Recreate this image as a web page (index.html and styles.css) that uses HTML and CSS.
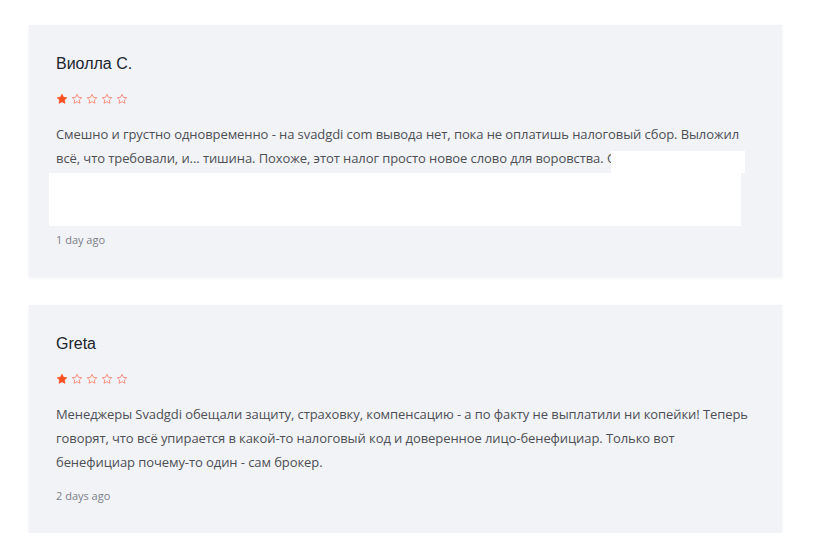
FILE: index.html
```html
<!DOCTYPE html>
<html lang="ru">
<head>
    <meta charset="UTF-8">
    <title>Отзывы</title>
    <link rel="stylesheet" href="styles.css">
</head>
<body>
    <div class="reviews">
        <div class="review">
            <div class="review-name">Виолла С.</div>
            <div class="stars">
                <svg class="star full" viewBox="0 0 24 24"><path d="M12 2.5l2.9 6.1 6.6.8-4.9 4.6 1.3 6.6L12 17.3l-5.9 3.3 1.3-6.6-4.9-4.6 6.6-.8z"/></svg>
                <svg class="star" viewBox="0 0 24 24"><path d="M12 2.5l2.9 6.1 6.6.8-4.9 4.6 1.3 6.6L12 17.3l-5.9 3.3 1.3-6.6-4.9-4.6 6.6-.8z"/></svg>
                <svg class="star" viewBox="0 0 24 24"><path d="M12 2.5l2.9 6.1 6.6.8-4.9 4.6 1.3 6.6L12 17.3l-5.9 3.3 1.3-6.6-4.9-4.6 6.6-.8z"/></svg>
                <svg class="star" viewBox="0 0 24 24"><path d="M12 2.5l2.9 6.1 6.6.8-4.9 4.6 1.3 6.6L12 17.3l-5.9 3.3 1.3-6.6-4.9-4.6 6.6-.8z"/></svg>
                <svg class="star" viewBox="0 0 24 24"><path d="M12 2.5l2.9 6.1 6.6.8-4.9 4.6 1.3 6.6L12 17.3l-5.9 3.3 1.3-6.6-4.9-4.6 6.6-.8z"/></svg>
            </div>
            <div class="review-text">
                Смешно и грустно одновременно - на svadgdi com вывода нет, пока не оплатишь налоговый сбор. Выложил всё, что требовали, и... тишина. Похоже, этот налог просто новое слово для воровства. Обходите стороной,
                если не хотите потерять деньги и нервы на бесконечных сборах.<br>
                Писал в поддержку - в ответ только шаблонные отписки.
                <span class="mask mask-top"></span>
                <span class="mask mask-bottom"></span>
            </div>
            <div class="review-date">1 day ago</div>
        </div>

        <div class="review">
            <div class="review-name">Greta</div>
            <div class="stars">
                <svg class="star full" viewBox="0 0 24 24"><path d="M12 2.5l2.9 6.1 6.6.8-4.9 4.6 1.3 6.6L12 17.3l-5.9 3.3 1.3-6.6-4.9-4.6 6.6-.8z"/></svg>
                <svg class="star" viewBox="0 0 24 24"><path d="M12 2.5l2.9 6.1 6.6.8-4.9 4.6 1.3 6.6L12 17.3l-5.9 3.3 1.3-6.6-4.9-4.6 6.6-.8z"/></svg>
                <svg class="star" viewBox="0 0 24 24"><path d="M12 2.5l2.9 6.1 6.6.8-4.9 4.6 1.3 6.6L12 17.3l-5.9 3.3 1.3-6.6-4.9-4.6 6.6-.8z"/></svg>
                <svg class="star" viewBox="0 0 24 24"><path d="M12 2.5l2.9 6.1 6.6.8-4.9 4.6 1.3 6.6L12 17.3l-5.9 3.3 1.3-6.6-4.9-4.6 6.6-.8z"/></svg>
                <svg class="star" viewBox="0 0 24 24"><path d="M12 2.5l2.9 6.1 6.6.8-4.9 4.6 1.3 6.6L12 17.3l-5.9 3.3 1.3-6.6-4.9-4.6 6.6-.8z"/></svg>
            </div>
            <div class="review-text">
                Менеджеры Svadgdi обещали защиту, страховку, компенсацию - а по факту не выплатили ни копейки! Теперь говорят, что всё упирается в какой-то налоговый код и доверенное лицо-бенефициар. Только вот бенефициар почему-то один - сам брокер.
            </div>
            <div class="review-date">2 days ago</div>
        </div>
    </div>
</body>
</html>
```

FILE: styles.css
```css
* {
    margin: 0;
    padding: 0;
    box-sizing: border-box;
}

body {
    background: #fff;
    font-family: 'Open Sans', 'Liberation Sans', sans-serif;
}

.reviews {
    padding: 25px 34px 0 29px;
    display: flex;
    flex-direction: column;
    gap: 28px;
}

.review {
    background: #f2f3f7;
    box-shadow: 0 1px 4px rgba(0,0,0,0.06);
    padding: 29px 27px;
    width: 753px;
}

.review-name {
    font-family: 'Liberation Sans', Arial, sans-serif;
    font-size: 16px;
    line-height: 20px;
    color: #20252d;
}

.stars {
    display: flex;
    gap: 3px;
    margin-top: 18px;
    height: 14px;
    align-items: center;
}

.star {
    width: 12px;
    height: 12px;
    fill: none;
    stroke: #f47b6b;
    stroke-width: 1.6;
    stroke-linejoin: round;
}

.star.full {
    fill: #ff4f1f;
    stroke: #ff4f1f;
}

.review-text {
    position: relative;
    margin-top: 16px;
    font-size: 13px;
    line-height: 24px;
    letter-spacing: -0.08px;
    color: #4d4f55;
}

.mask {
    position: absolute;
    background: #fff;
}

.mask-top {
    left: 555px;
    top: 29px;
    width: 134px;
    height: 22px;
}

.mask-bottom {
    left: -7px;
    top: 51px;
    width: 692px;
    height: 53px;
}

.review-date {
    margin-top: 14px;
    font-size: 11px;
    line-height: 16px;
    color: #7d8089;
}
```
